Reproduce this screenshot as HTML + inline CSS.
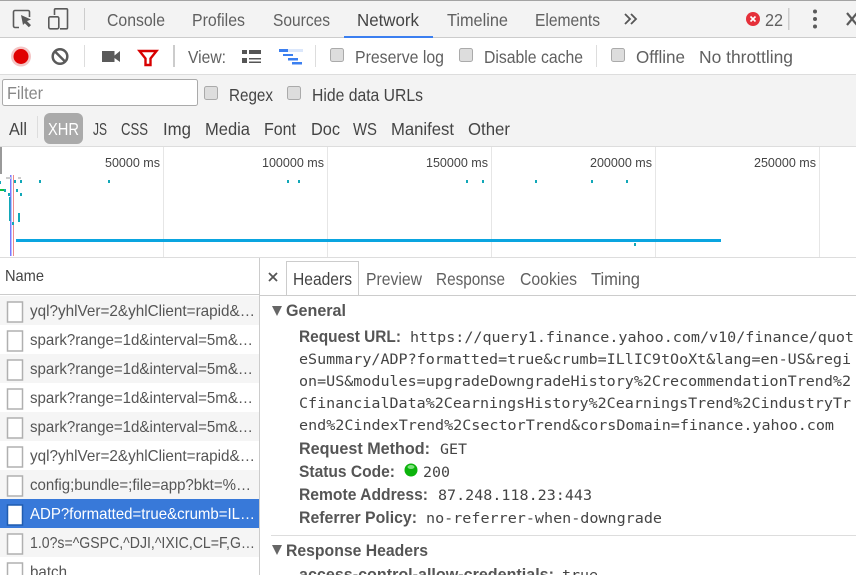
<!DOCTYPE html>
<html><head><meta charset="utf-8"><style>
html,body{margin:0;padding:0;background:#fff;width:856px;height:575px;overflow:hidden}
svg{display:block}
text{font-family:"Liberation Sans",sans-serif;font-size:17.5px;fill:#606060}
.d{fill:#444}
.n{font-size:16px;fill:#555}
.b{font-weight:bold;fill:#555;font-size:16.5px}
.m{font-family:"DejaVu Sans Mono",monospace;font-size:14.5px;fill:#444}
.c{fill:#ddd;stroke:#aaa;stroke-width:1}
.f{fill:#fff;stroke:#b0b0b0;stroke-width:1.5}
.t{font-size:13px}
</style></head><body>
<svg width="856" height="575" viewBox="0 0 856 575" xmlns="http://www.w3.org/2000/svg">
<!-- top bar -->
<rect width="856" height="38" fill="#f3f3f3"/>
<rect width="856" height="1" fill="#a3a3a3"/>
<rect y="37" width="856" height="1" fill="#ccc"/>
<rect x="344" y="36" width="89" height="3" fill="#3b7ff0"/>
<path d="M19 27.500h-4a1.500 1.500 0 0 1-1.500-1.500V12a1.500 1.500 0 0 1 1.500-1.500h13a1.500 1.500 0 0 1 1.500 1.500v5" fill="none" stroke="#5a5a5a" stroke-width="1.600"/>
<path d="M21 15l10 4.500-4 1.600 4 4-2.200 2.200-4-4L23 25z" fill="#5a5a5a"/>
<rect x="48.800" y="16.800" width="10" height="12" rx="1.500" fill="none" stroke="#5a5a5a" stroke-width="1.600"/>
<path d="M54.500 15V9.800a1 1 0 0 1 1-1h11a1 1 0 0 1 1 1v18a1 1 0 0 1-1 1H60" fill="none" stroke="#5a5a5a" stroke-width="1.600"/>
<rect x="84" y="8" width="1" height="22" fill="#ccc"/>
<text x="107" y="26" textLength="58" lengthAdjust="spacingAndGlyphs">Console</text>
<text x="192" y="26" textLength="53" lengthAdjust="spacingAndGlyphs">Profiles</text>
<text x="273" y="26" textLength="57" lengthAdjust="spacingAndGlyphs">Sources</text>
<text x="357" y="26" textLength="62" lengthAdjust="spacingAndGlyphs" class="d">Network</text>
<text x="447" y="26" textLength="61" lengthAdjust="spacingAndGlyphs">Timeline</text>
<text x="535" y="26" textLength="65" lengthAdjust="spacingAndGlyphs">Elements</text>
<path d="M625 14l5 5-5 5M631 14l5 5-5 5" fill="none" stroke="#555" stroke-width="1.800"/>
<circle cx="753" cy="19" r="7" fill="#e5303a"/>
<path d="M750.500 16.500l5 5M755.500 16.500l-5 5" stroke="#fff" stroke-width="1.600"/>
<text x="765" y="26" textLength="18" lengthAdjust="spacingAndGlyphs">22</text>
<rect x="788" y="8" width="1.500" height="22" fill="#ccc"/>
<circle cx="815" cy="11.500" r="2" fill="#5a5a5a"/><circle cx="815" cy="19" r="2" fill="#5a5a5a"/><circle cx="815" cy="26.500" r="2" fill="#5a5a5a"/>
<path d="M847 13l10 12M857 13l-10 12" stroke="#5a5a5a" stroke-width="2.200"/>
<!-- toolbar 2 -->
<rect y="38" width="856" height="36" fill="#fff"/>
<rect y="74" width="856" height="1" fill="#ddd"/>
<circle cx="21" cy="56.500" r="10" fill="#f4c5c5"/>
<circle cx="21" cy="56.500" r="7.500" fill="#e00000"/>
<circle cx="60" cy="56.500" r="7.300" fill="none" stroke="#5a5a5a" stroke-width="2.500"/>
<path d="M55 51.500l10 10" stroke="#5a5a5a" stroke-width="2.500"/>
<rect x="84" y="45" width="1" height="22" fill="#ddd"/>
<path d="M102 51h12.500v4.500l5.500-4.500v11l-5.500-4v4H102z" fill="#5a5a5a"/>
<path d="M139.500 51h17l-6 7.500V65h-5v-6.500z" fill="none" stroke="#d80000" stroke-width="2.400"/>
<rect x="173" y="45" width="2" height="22" fill="#ccc"/>
<text x="188" y="63" textLength="38" lengthAdjust="spacingAndGlyphs">View:</text>
<path d="M242 50h5v4h-5zM249 50h12v4h-12zM242 58h5v5h-5zM249 58h12v1.500h-12zM249 61.500h12v1.500h-12z" fill="#555"/>
<rect x="279" y="49" width="24" height="3" fill="#dbe7fb"/>
<rect x="279" y="49" width="9" height="3" fill="#3b7ff0"/>
<rect x="283" y="54" width="10" height="2" fill="#3b7ff0"/>
<rect x="288" y="58" width="10" height="2.500" fill="#3b7ff0"/>
<rect x="292" y="62" width="10" height="2.500" fill="#3b7ff0"/>
<rect x="315" y="45" width="1" height="22" fill="#ddd"/>
<rect class="c" x="330.500" y="48.500" width="13" height="13" rx="2"/>
<text x="355" y="63" textLength="89" lengthAdjust="spacingAndGlyphs">Preserve log</text>
<rect class="c" x="459.500" y="48.500" width="13" height="13" rx="2"/>
<text x="484" y="63" textLength="99" lengthAdjust="spacingAndGlyphs">Disable cache</text>
<rect x="596" y="45" width="1" height="22" fill="#ddd"/>
<rect class="c" x="611.500" y="48.500" width="13" height="13" rx="2"/>
<text x="636" y="63" textLength="49" lengthAdjust="spacingAndGlyphs">Offline</text>
<text x="699" y="63" textLength="94" lengthAdjust="spacingAndGlyphs">No throttling</text>
<!-- filter -->
<rect y="75" width="856" height="71" fill="#f3f3f3"/>
<rect y="146" width="856" height="1" fill="#ddd"/>
<rect x="2.500" y="79.500" width="195" height="26" rx="2" fill="#fff" stroke="#aaa"/>
<text x="7" y="99" textLength="36" lengthAdjust="spacingAndGlyphs" style="fill:#888">Filter</text>
<rect class="c" x="204.500" y="86.500" width="13" height="13" rx="2"/>
<text x="229" y="101" textLength="44" lengthAdjust="spacingAndGlyphs" class="d">Regex</text>
<rect class="c" x="287.500" y="86.500" width="13" height="13" rx="2"/>
<text x="312" y="101" textLength="111" lengthAdjust="spacingAndGlyphs" class="d">Hide data URLs</text>
<text x="9" y="135" textLength="18" lengthAdjust="spacingAndGlyphs" class="d">All</text>
<rect x="37" y="116" width="1" height="22" fill="#ddd"/>
<rect x="44" y="113" width="39" height="31" rx="6" fill="#aaa"/>
<text x="48" y="135" textLength="31" lengthAdjust="spacingAndGlyphs" style="fill:#fff">XHR</text>
<text x="93" y="135" textLength="14" lengthAdjust="spacingAndGlyphs" class="d">JS</text>
<text x="121" y="135" textLength="27" lengthAdjust="spacingAndGlyphs" class="d">CSS</text>
<text x="163" y="135" textLength="28" lengthAdjust="spacingAndGlyphs" class="d">Img</text>
<text x="205" y="135" textLength="45" lengthAdjust="spacingAndGlyphs" class="d">Media</text>
<text x="264" y="135" textLength="32" lengthAdjust="spacingAndGlyphs" class="d">Font</text>
<text x="311" y="135" textLength="29" lengthAdjust="spacingAndGlyphs" class="d">Doc</text>
<text x="353" y="135" textLength="24" lengthAdjust="spacingAndGlyphs" class="d">WS</text>
<text x="391" y="135" textLength="63" lengthAdjust="spacingAndGlyphs" class="d">Manifest</text>
<text x="468" y="135" textLength="42" lengthAdjust="spacingAndGlyphs" class="d">Other</text>
<!-- timeline -->
<rect y="147" width="856" height="110" fill="#fff"/>
<rect y="257" width="856" height="1" fill="#ddd"/>
<rect x="0" y="147" width="2" height="27" fill="#999"/>
<g fill="#e6e6e6"><rect x="163" y="147" width="1" height="110"/><rect x="327" y="147" width="1" height="110"/><rect x="491" y="147" width="1" height="110"/><rect x="655" y="147" width="1" height="110"/><rect x="819" y="147" width="1" height="110"/></g>
<text x="105" y="167" textLength="55" lengthAdjust="spacingAndGlyphs" class="t d">50000 ms</text>
<text x="262" y="167" textLength="62" lengthAdjust="spacingAndGlyphs" class="t d">100000 ms</text>
<text x="426" y="167" textLength="62" lengthAdjust="spacingAndGlyphs" class="t d">150000 ms</text>
<text x="590" y="167" textLength="62" lengthAdjust="spacingAndGlyphs" class="t d">200000 ms</text>
<text x="754" y="167" textLength="62" lengthAdjust="spacingAndGlyphs" class="t d">250000 ms</text>
<rect x="10" y="175" width="1.500" height="81" fill="#7a7aff"/>
<rect x="13" y="175" width="1" height="81" fill="#f08a8a"/>
<rect x="16" y="239" width="705" height="3" fill="#0aa5e0"/>
<rect x="6" y="177" width="5" height="2" fill="#ccc"/><rect x="18" y="177" width="3" height="2" fill="#ccc"/>
<g fill="#12a8b8">
<rect x="0" y="181" width="1" height="3"/><rect x="14" y="180" width="2" height="3"/><rect x="20" y="180" width="2" height="3"/><rect x="39" y="180" width="2" height="3"/><rect x="108" y="180" width="2" height="3"/><rect x="287" y="180" width="2" height="3"/><rect x="298" y="180" width="2" height="3"/><rect x="466" y="180" width="2" height="3"/><rect x="482" y="180" width="2" height="3"/><rect x="535" y="180" width="2" height="3"/><rect x="591" y="180" width="2" height="3"/><rect x="626" y="180" width="2" height="3"/><rect x="634" y="243" width="2" height="3"/>
<rect x="4" y="189" width="2" height="3"/><rect x="16" y="189" width="2" height="3"/><rect x="20" y="193" width="2" height="3"/><rect x="8" y="193" width="2" height="3"/><rect x="9" y="197" width="1.500" height="24"/><rect x="18" y="213" width="2" height="9"/><rect x="12" y="222" width="2" height="3"/>
</g>
<rect x="0" y="189" width="4" height="2" fill="#10c040"/>
<!-- name column -->
<text x="5" y="281" textLength="39" lengthAdjust="spacingAndGlyphs" class="n" style="fill:#444">Name</text>
<rect y="294" width="259" height="1" fill="#ccc"/>
<g fill="#f5f5f5"><rect y="296" width="259" height="29"/><rect y="354" width="259" height="29"/><rect y="412" width="259" height="29"/><rect y="470" width="259" height="29"/><rect y="528" width="259" height="29"/></g>
<rect y="499" width="259" height="29" fill="#3879d9"/>
<rect class="f" x="7.500" y="302" width="15" height="20"/>
<rect class="f" x="7.500" y="331" width="15" height="20"/>
<rect class="f" x="7.500" y="360" width="15" height="20"/>
<rect class="f" x="7.500" y="389" width="15" height="20"/>
<rect class="f" x="7.500" y="418" width="15" height="20"/>
<rect class="f" x="7.500" y="447" width="15" height="20"/>
<rect class="f" x="7.500" y="476" width="15" height="20"/>
<rect x="7.500" y="505" width="15" height="20" fill="#fff" stroke="#1f5cb0" stroke-width="1.500"/>
<rect class="f" x="7.500" y="534" width="15" height="20"/>
<rect class="f" x="7.500" y="563" width="15" height="20"/>
<text x="30" y="316" textLength="225" lengthAdjust="spacingAndGlyphs" class="n">yql?yhlVer=2&amp;yhlClient=rapid&amp;…</text>
<text x="30" y="345" textLength="223" lengthAdjust="spacingAndGlyphs" class="n">spark?range=1d&amp;interval=5m&amp;…</text>
<text x="30" y="374" textLength="223" lengthAdjust="spacingAndGlyphs" class="n">spark?range=1d&amp;interval=5m&amp;…</text>
<text x="30" y="403" textLength="223" lengthAdjust="spacingAndGlyphs" class="n">spark?range=1d&amp;interval=5m&amp;…</text>
<text x="30" y="432" textLength="223" lengthAdjust="spacingAndGlyphs" class="n">spark?range=1d&amp;interval=5m&amp;…</text>
<text x="30" y="461" textLength="225" lengthAdjust="spacingAndGlyphs" class="n">yql?yhlVer=2&amp;yhlClient=rapid&amp;…</text>
<text x="30" y="490" textLength="221" lengthAdjust="spacingAndGlyphs" class="n">config;bundle=;file=app?bkt=%…</text>
<text x="30" y="519" textLength="225" lengthAdjust="spacingAndGlyphs" class="n" style="fill:#fff">ADP?formatted=true&amp;crumb=IL…</text>
<text x="30" y="548" textLength="225" lengthAdjust="spacingAndGlyphs" class="n">1.0?s=^GSPC,^DJI,^IXIC,CL=F,G…</text>
<text x="30" y="577" textLength="37" lengthAdjust="spacingAndGlyphs" class="n">batch</text>
<rect x="259" y="258" width="1" height="317" fill="#ccc"/>
<!-- detail -->
<path d="M269 273l8 8M277 273l-8 8" stroke="#555" stroke-width="1.800"/>
<rect x="260" y="295" width="596" height="1" fill="#ccc"/>
<path d="M286.500 295V261.500H358.500V295" fill="#fff" stroke="#ccc"/>
<text x="293" y="285" textLength="59" lengthAdjust="spacingAndGlyphs" class="d">Headers</text>
<text x="366" y="285" textLength="56" lengthAdjust="spacingAndGlyphs">Preview</text>
<text x="436" y="285" textLength="69" lengthAdjust="spacingAndGlyphs">Response</text>
<text x="520" y="285" textLength="57" lengthAdjust="spacingAndGlyphs">Cookies</text>
<text x="591" y="285" textLength="49" lengthAdjust="spacingAndGlyphs">Timing</text>
<path d="M272 306h10l-5 10z" fill="#666"/>
<text x="286" y="316" textLength="60" lengthAdjust="spacingAndGlyphs" class="b">General</text>
<text x="299" y="342" textLength="102" lengthAdjust="spacingAndGlyphs" class="b">Request URL:</text>
<text x="410" y="342" textLength="444" lengthAdjust="spacingAndGlyphs" class="m">https://query1.finance.yahoo.com/v10/finance/quot</text>
<text x="299" y="364" textLength="552" lengthAdjust="spacingAndGlyphs" class="m">eSummary/ADP?formatted=true&amp;crumb=ILlIC9tOoXt&amp;lang=en-US&amp;regi</text>
<text x="299" y="386" textLength="552" lengthAdjust="spacingAndGlyphs" class="m">on=US&amp;modules=upgradeDowngradeHistory%2CrecommendationTrend%2</text>
<text x="299" y="408" textLength="552" lengthAdjust="spacingAndGlyphs" class="m">CfinancialData%2CearningsHistory%2CearningsTrend%2CindustryTr</text>
<text x="299" y="430" textLength="535" lengthAdjust="spacingAndGlyphs" class="m">end%2CindexTrend%2CsectorTrend&amp;corsDomain=finance.yahoo.com</text>
<text x="299" y="454" textLength="131" lengthAdjust="spacingAndGlyphs" class="b">Request Method:</text>
<text x="440" y="454" textLength="27" lengthAdjust="spacingAndGlyphs" class="m">GET</text>
<text x="299" y="477" textLength="96" lengthAdjust="spacingAndGlyphs" class="b">Status Code:</text>
<circle cx="411" cy="470" r="6.500" fill="#0cb30c"/>
<ellipse cx="411" cy="467" rx="3.500" ry="2" fill="#7fe07f"/>
<text x="423" y="477" textLength="27" lengthAdjust="spacingAndGlyphs" class="m">200</text>
<text x="299" y="500" textLength="129" lengthAdjust="spacingAndGlyphs" class="b">Remote Address:</text>
<text x="438" y="500" textLength="154" lengthAdjust="spacingAndGlyphs" class="m">87.248.118.23:443</text>
<text x="299" y="523" textLength="118" lengthAdjust="spacingAndGlyphs" class="b">Referrer Policy:</text>
<text x="426" y="523" textLength="236" lengthAdjust="spacingAndGlyphs" class="m">no-referrer-when-downgrade</text>
<rect x="271" y="535" width="585" height="1" fill="#ddd"/>
<path d="M272 545h10l-5 10z" fill="#666"/>
<text x="286" y="556" textLength="142" lengthAdjust="spacingAndGlyphs" class="b">Response Headers</text>
<text x="299" y="580" textLength="255" lengthAdjust="spacingAndGlyphs" class="b">access-control-allow-credentials:</text>
<text x="562" y="580" textLength="36" lengthAdjust="spacingAndGlyphs" class="m">true</text>
</svg>
</body></html>
